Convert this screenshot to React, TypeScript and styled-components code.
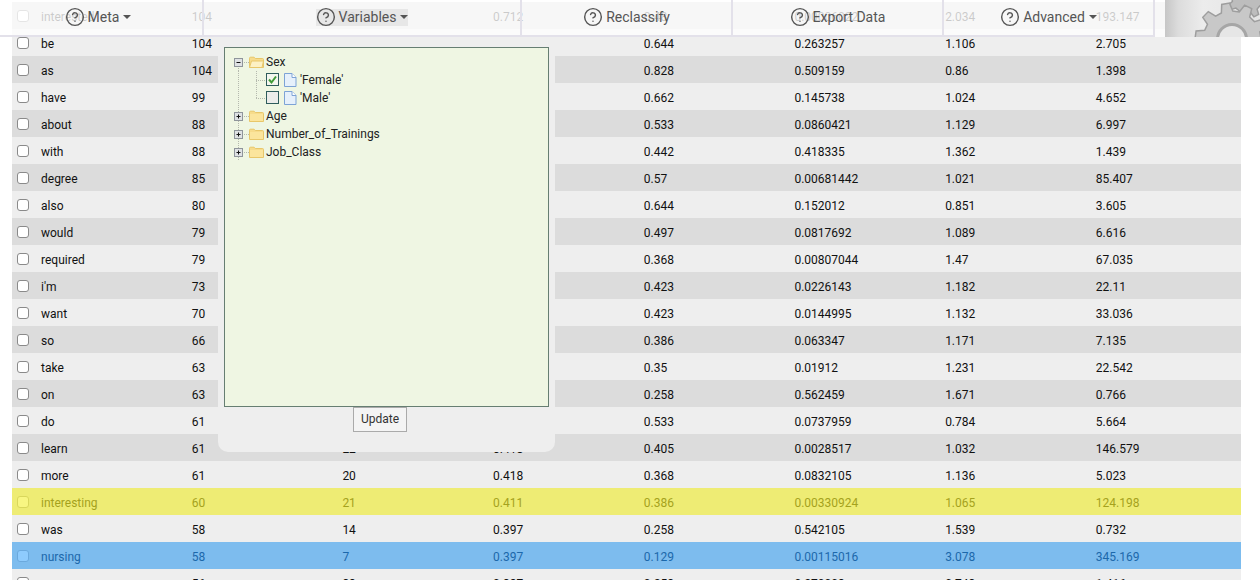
import React from "react";
import styled, { createGlobalStyle } from "styled-components";
import { CircleHelp } from "lucide-react";

const GlobalStyle = createGlobalStyle`
  html, body {
    margin: 0;
    padding: 0;
    background: #fff;
    height: 580px;
    overflow: hidden;
    font-family: Roboto, "Liberation Sans", sans-serif;
  }
`;

const Page = styled.div`
  position: relative;
  width: 1260px;
  height: 580px;
  overflow: hidden;
  padding: 2px 19px 0 12px;
  box-sizing: border-box;
`;

const Row = styled.div<{ $tone?: "yellow" | "blue" }>`
  display: grid;
  grid-template-columns: 29px repeat(7, 150.7px) 1fr;
  height: 27px;
  padding-top: 3px;
  box-sizing: border-box;
  align-items: center;
  font-size: 12px;
  line-height: 14px;
  color: ${(p) => (p.$tone === "yellow" ? "#a5a21d" : p.$tone === "blue" ? "#1c68ab" : "#111")};
  background: ${(p) => (p.$tone === "yellow" ? "#eeec74" : p.$tone === "blue" ? "#7dbcee" : "#dcdcdc")};
  &:nth-child(even) {
    background: ${(p) => (p.$tone === "yellow" ? "#eeec74" : p.$tone === "blue" ? "#7dbcee" : "#eeeeee")};
  }
`;

const RowCheck = styled.span<{ $tone?: "yellow" | "blue" }>`
  display: block;
  width: 10px;
  height: 10px;
  margin: -3px 0 0 5px;
  border-radius: 3px;
  border: 1px solid ${(p) => (p.$tone === "yellow" ? "#d9d75c" : p.$tone === "blue" ? "#6ba9dd" : "#8a8a8a")};
  background: ${(p) => (p.$tone === "yellow" ? "#f8f682" : p.$tone === "blue" ? "#8ecbfd" : "#fff")};
`;

const TopBar = styled.div`
  position: absolute;
  top: 0;
  left: 0;
  width: 1260px;
  height: 37px;
  display: flex;
  background: rgba(255, 255, 255, 0.78);
`;

const Nav = styled.nav`
  display: flex;
  width: 1155px;
  height: 37px;
  box-sizing: border-box;
  border-bottom: 2px solid #e3e1ea;
`;

const NavCell = styled.div<{ $width: number; $inset?: number }>`
  width: ${(p) => p.$width}px;
  padding-right: ${(p) => p.$inset ?? 0}px;
  box-sizing: border-box;
  border-right: 2px solid #e3e1ea;
  display: flex;
  align-items: center;
  justify-content: center;
`;

const NavItem = styled.div<{ $active?: boolean }>`
  display: flex;
  align-items: center;
  gap: 3px;
  height: 17px;
  margin-top: -1px;
  font-size: 14px;
  color: #555;
  background: ${(p) => (p.$active ? "rgba(225, 225, 225, 0.75)" : "transparent")};
  svg {
    flex: none;
  }
`;

const Caret = styled.span`
  width: 0;
  height: 0;
  margin-left: 1px;
  border-left: 4px solid transparent;
  border-right: 4px solid transparent;
  border-top: 4px solid #555;
`;

const GearBox = styled.div`
  margin-left: 10px;
  width: 95px;
  height: 37px;
  overflow: hidden;
  background: linear-gradient(90deg, #c6c6c6 0, #dcdcdc 14%, #ececec 40%, #e4e4e4 100%);
  svg {
    display: block;
  }
`;

const Popup = styled.div`
  position: absolute;
  top: 37px;
  left: 218px;
  width: 337px;
  height: 415px;
  background: #eeeeee;
  border-radius: 0 0 10px 10px;
  padding: 10px 6px 0;
  box-sizing: border-box;
  display: flex;
  flex-direction: column;
  align-items: center;
`;

const TreeBox = styled.div`
  width: 325px;
  height: 360px;
  flex: none;
  box-sizing: border-box;
  border: 1px solid #667e72;
  background: #eff6e3;
  padding: 5px 0 0 8px;
`;

const TreeRow = styled.div`
  display: flex;
  align-items: center;
  height: 18px;
  font-size: 12px;
  color: #222;
  svg {
    flex: none;
    display: block;
  }
`;

const NodeLabel = styled.span<{ $leaf?: boolean }>`
  margin-left: ${(p) => (p.$leaf ? 3 : 2)}px;
  white-space: nowrap;
`;

const UpdateButton = styled.button`
  width: 54px;
  height: 25px;
  margin-right: 13px;
  padding: 0 0 2px;
  box-sizing: border-box;
  border: 1px solid #aaa;
  background: #f4f4f4;
  color: #333;
  font: 12px Roboto, "Liberation Sans", sans-serif;
`;

type Tone = "yellow" | "blue";
type Rec = { cells: string[]; tone?: Tone };

const rows: Rec[] = [
  { cells: ["interested", "104", "40", "0.712", "0.48", "0.00006022", "2.034", "193.147"] },
  { cells: ["be", "104", "", "", "0.644", "0.263257", "1.106", "2.705"] },
  { cells: ["as", "104", "", "", "0.828", "0.509159", "0.86", "1.398"] },
  { cells: ["have", "99", "", "", "0.662", "0.145738", "1.024", "4.652"] },
  { cells: ["about", "88", "", "", "0.533", "0.0860421", "1.129", "6.997"] },
  { cells: ["with", "88", "", "", "0.442", "0.418335", "1.362", "1.439"] },
  { cells: ["degree", "85", "", "", "0.57", "0.00681442", "1.021", "85.407"] },
  { cells: ["also", "80", "", "", "0.644", "0.152012", "0.851", "3.605"] },
  { cells: ["would", "79", "", "", "0.497", "0.0817692", "1.089", "6.616"] },
  { cells: ["required", "79", "", "", "0.368", "0.00807044", "1.47", "67.035"] },
  { cells: ["i'm", "73", "", "", "0.423", "0.0226143", "1.182", "22.11"] },
  { cells: ["want", "70", "", "", "0.423", "0.0144995", "1.132", "33.036"] },
  { cells: ["so", "66", "", "", "0.386", "0.063347", "1.171", "7.135"] },
  { cells: ["take", "63", "", "", "0.35", "0.01912", "1.231", "22.542"] },
  { cells: ["on", "63", "", "", "0.258", "0.562459", "1.671", "0.766"] },
  { cells: ["do", "61", "", "", "0.533", "0.0737959", "0.784", "5.664"] },
  { cells: ["learn", "61", "22", "0.418", "0.405", "0.0028517", "1.032", "146.579"] },
  { cells: ["more", "61", "20", "0.418", "0.368", "0.0832105", "1.136", "5.023"] },
  { cells: ["interesting", "60", "21", "0.411", "0.386", "0.00330924", "1.065", "124.198"], tone: "yellow" },
  { cells: ["was", "58", "14", "0.397", "0.258", "0.542105", "1.539", "0.732"] },
  { cells: ["nursing", "58", "7", "0.397", "0.129", "0.00115016", "3.078", "345.169"], tone: "blue" },
  { cells: ["you", "56", "33", "0.387", "0.258", "0.270003", "0.743", "1.416"] },
];

const navItems = [
  { label: "Meta", width: 204, caret: true, inset: 6 },
  { label: "Variables", width: 318, caret: true, active: true },
  { label: "Reclassify", width: 211 },
  { label: "Export Data", width: 211 },
  { label: "Advanced", width: 211, caret: true },
];

function gearPoints(cx: number, cy: number, outer: number, inner: number, teeth: number, turn: number) {
  const pts: string[] = [];
  const step = (Math.PI * 2) / teeth;
  for (let i = 0; i < teeth; i++) {
    const a = turn + i * step;
    const corners: [number, number][] = [
      [inner, a - step * 0.32],
      [outer, a - step * 0.17],
      [outer, a + step * 0.17],
      [inner, a + step * 0.32],
    ];
    corners.forEach(([r, t]) => {
      pts.push(`${(cx + r * Math.cos(t)).toFixed(1)},${(cy + r * Math.sin(t)).toFixed(1)}`);
    });
  }
  return pts.join(" ");
}

const Gear = () => (
  <svg width="95" height="37" viewBox="0 0 95 37">
    <polygon points={gearPoints(82, -2, 20, 15, 8, 0.3)} fill="#bdbdbd" stroke="#9c9c9c" strokeWidth="1.5" />
    <polygon points={gearPoints(67, 40, 37, 29, 10, -1.745)} fill="#c8c8c8" stroke="#9e9e9e" strokeWidth="1.5" />
    <circle cx="67" cy="39" r="14.5" fill="#e6e6e6" stroke="#a6a6a6" strokeWidth="3" />
  </svg>
);

const Expander = ({ open }: { open?: boolean }) => (
  <svg width="16" height="18" viewBox="0 0 16 18">
    <line x1="5.5" y1={open ? 9 : 0} x2="5.5" y2="18" stroke="#b5b9ae" strokeDasharray="1 1" />
    <line x1="9" y1="9.5" x2="16" y2="9.5" stroke="#b5b9ae" strokeDasharray="1 1" />
    <rect x="1.5" y="5.5" width="8" height="8" fill="#dfe2e4" stroke="#8f959b" />
    <line x1="3.5" y1="9.5" x2="7.5" y2="9.5" stroke="#111" />
    {!open && <line x1="5.5" y1="7.5" x2="5.5" y2="11.5" stroke="#111" />}
  </svg>
);

const Folder = ({ open }: { open?: boolean }) => (
  <svg width="15" height="14" viewBox="0 0 15 14">
    <path d="M.5 12.5V3.2c0-.6.4-1 1-1h3.6l1.2 1.3h7.2c.6 0 1 .4 1 1v8z" fill="#f7dc8c" stroke="#e8c76a" />
    {open ? (
      <path d="M.5 12.5 2.5 6h12l-1.5 6.5z" fill="#fdf1c4" stroke="#e8c76a" />
    ) : (
      <rect x="1" y="5" width="13" height="7" fill="#fbe59d" />
    )}
  </svg>
);

const Spine = ({ last }: { last?: boolean }) => (
  <svg width="33" height="18" viewBox="0 0 33 18">
    <line x1="5.5" y1="0" x2="5.5" y2="18" stroke="#b5b9ae" strokeDasharray="1 1" />
    <line x1="23.5" y1="0" x2="23.5" y2={last ? 9 : 18} stroke="#b5b9ae" strokeDasharray="1 1" />
    <line x1="23" y1="9.5" x2="33" y2="9.5" stroke="#b5b9ae" strokeDasharray="1 1" />
  </svg>
);

const TreeCheck = ({ checked }: { checked?: boolean }) => (
  <svg width="13" height="14" viewBox="0 0 13 14">
    <rect x=".5" y=".5" width="12" height="12" fill={checked ? "#f4f6ee" : "#ececea"} stroke="#2f5c5c" />
    {checked && <path d="M3 6.5 5.5 9.5 10 3.5" fill="none" stroke="#3f9a36" strokeWidth="2" />}
  </svg>
);

const FileIcon = () => (
  <svg width="13" height="14" viewBox="0 0 13 14" style={{ marginLeft: 5 }}>
    <path d="M.5.5h7.5l4 4v9H.5z" fill="#e6f0fb" stroke="#7da3d6" />
    <path d="M8 .5v4h4" fill="#fff" stroke="#7da3d6" />
  </svg>
);

export default function App() {
  return (
    <Page>
      <GlobalStyle />
      {rows.map((r) => (
        <Row key={r.cells[0] + r.cells[1]} $tone={r.tone}>
          <RowCheck $tone={r.tone} />
          {r.cells.map((c, i) => (
            <span key={i}>{c}</span>
          ))}
        </Row>
      ))}

      <TopBar>
        <Nav>
          {navItems.map((n) => (
            <NavCell key={n.label} $width={n.width} $inset={n.inset}>
              <NavItem $active={n.active}>
                <CircleHelp size={20} strokeWidth={1.7} color="#555" />
                {n.label}
                {n.caret && <Caret />}
              </NavItem>
            </NavCell>
          ))}
        </Nav>
        <GearBox>
          <Gear />
        </GearBox>
      </TopBar>

      <Popup>
        <TreeBox>
          <TreeRow>
            <Expander open />
            <Folder open />
            <NodeLabel>Sex</NodeLabel>
          </TreeRow>
          <TreeRow>
            <Spine />
            <TreeCheck checked />
            <FileIcon />
            <NodeLabel $leaf>'Female'</NodeLabel>
          </TreeRow>
          <TreeRow>
            <Spine last />
            <TreeCheck />
            <FileIcon />
            <NodeLabel $leaf>'Male'</NodeLabel>
          </TreeRow>
          <TreeRow>
            <Expander />
            <Folder />
            <NodeLabel>Age</NodeLabel>
          </TreeRow>
          <TreeRow>
            <Expander />
            <Folder />
            <NodeLabel>Number_of_Trainings</NodeLabel>
          </TreeRow>
          <TreeRow>
            <Expander />
            <Folder />
            <NodeLabel>Job_Class</NodeLabel>
          </TreeRow>
        </TreeBox>
        <UpdateButton>Update</UpdateButton>
      </Popup>
    </Page>
  );
}
